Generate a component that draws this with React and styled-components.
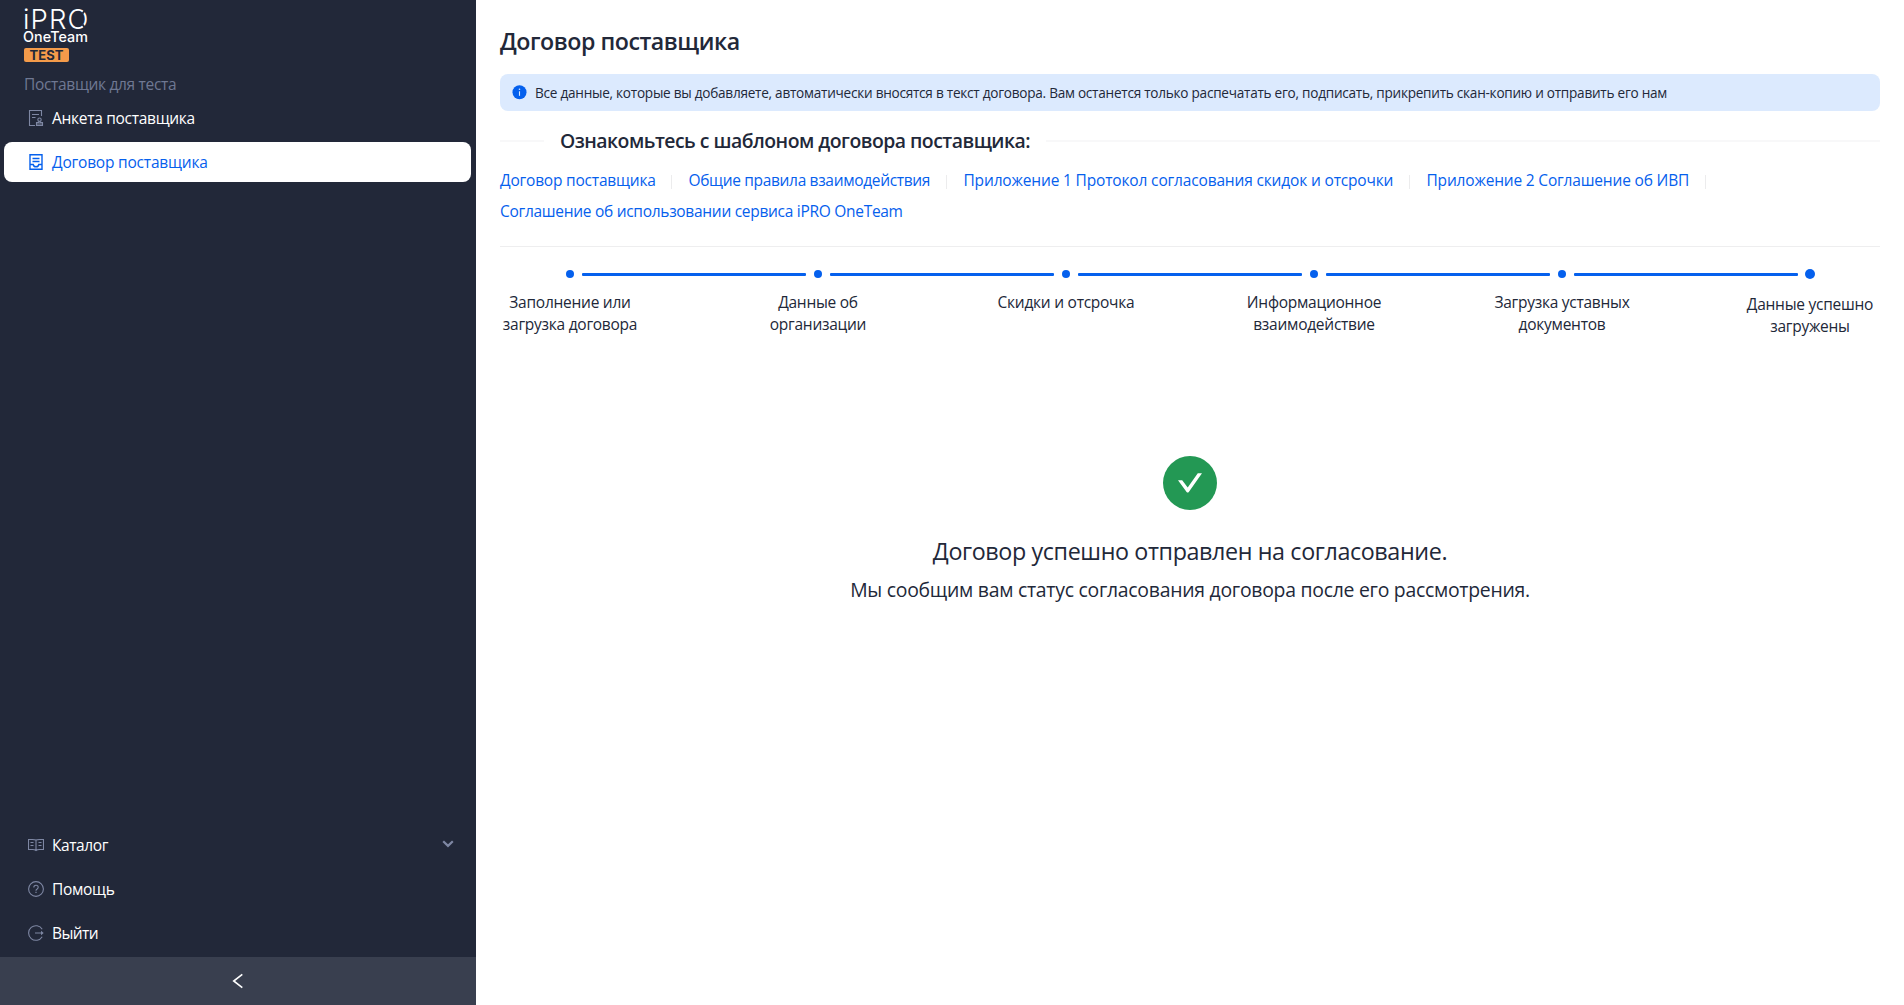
import React from 'react';
import styled, { createGlobalStyle } from 'styled-components';

const GlobalStyle = createGlobalStyle`
  * { box-sizing: border-box; }
  body { margin: 0; background: #fff; }
`;

const Page = styled.div`
  display: flex;
  height: 1005px;
  overflow: hidden;
  color: #222839;
  font: 400 15.5px/22px "Open Sans", "Noto Sans", sans-serif;
`;

/* Sidebar */

const Sidebar = styled.aside`
  display: flex;
  flex-direction: column;
  flex: none;
  width: 476px;
  background: #222839;
`;

const Brand = styled.div`
  display: flex;
  flex-direction: column;
  align-items: flex-start;
  padding: 7px 24px 0 23px;
  height: 72px;
  color: #fff;
  font-family: Inter, sans-serif;
`;

const BrandName = styled.div`
  position: relative;
  height: 24px;
  font-size: 27.5px;
  font-weight: 300;
  line-height: 24px;
  letter-spacing: 1.1px;

  /* cuts in the ring of the last letter */
  &::before, &::after {
    content: '';
    position: absolute;
    right: 4px;
    width: 2px;
    height: 5px;
    background: #222839;
  }
  &::before { top: 2px; transform: rotate(35deg); }
  &::after { top: 17px; transform: rotate(-35deg); }
`;

const BrandTeam = styled.div`
  height: 17px;
  font-size: 14.3px;
  font-weight: 500;
  line-height: 12px;
  letter-spacing: 0.1px;
`;

const BrandBadge = styled.div`
  width: 45px;
  height: 14px;
  margin-left: 1px;
  border-radius: 2px;
  background: #f49b4a;
  color: #222839;
  font-size: 13px;
  font-weight: 700;
  line-height: 14px;
  text-align: center;
`;

const Account = styled.div`
  height: 26px;
  padding-left: 24px;
  color: #6f7893;
  letter-spacing: -0.32px;
  line-height: 24px;
`;

const Menu = styled.nav`
  display: flex;
  flex-direction: column;
  gap: 4px;
  padding: 0 5px 4px 4px;
`;

const Spacer = styled.div`
  flex: 1;
`;

const MenuItem = styled.a`
  display: flex;
  align-items: center;
  gap: 8px;
  height: 40px;
  padding: 0 17px 0 24px;
  border-radius: 8px;
  background: ${(p) => (p.$active ? '#fff' : 'transparent')};
  color: ${(p) => (p.$active ? '#0560ed' : '#fff')};
  letter-spacing: ${(p) => p.$tracking}px;

  svg { flex: none; color: ${(p) => (p.$active ? '#0560ed' : '#7e87a3')}; }
`;

const MenuLabel = styled.span`
  flex: 1;
`;

const Collapse = styled.div`
  display: flex;
  align-items: center;
  justify-content: center;
  height: 48px;
  background: #393f4f;
  color: #fff;
`;

/* Content */

const Main = styled.main`
  flex: 1;
  display: flex;
  flex-direction: column;
  padding: 25px 24px 0;
`;

const Title = styled.h1`
  margin: 0 0 17px;
  font-size: 23.2px;
  font-weight: 600;
  line-height: 32px;
  letter-spacing: -0.47px;
`;

const Alert = styled.div`
  display: flex;
  align-items: center;
  gap: 8px;
  height: 37px;
  padding: 0 12px;
  border-radius: 8px;
  background: #dceafe;
  font-size: 13.6px;
  letter-spacing: -0.256px;
  white-space: nowrap;
`;

const SectionTitle = styled.h2`
  display: flex;
  align-items: center;
  gap: 16px;
  margin: 16px 0 15px;
  font-size: 19.4px;
  font-weight: 600;
  line-height: 27px;
  letter-spacing: -0.51px;
  white-space: nowrap;

  &::before, &::after {
    content: '';
    height: 2px;
    background: #f8f8f9;
  }
  &::before { width: 44px; }
  &::after { flex: 1; }
`;

const Links = styled.div`
  display: flex;
  flex-wrap: wrap;
  row-gap: 9px;
  padding-bottom: 24px;
  border-bottom: 1px solid #eeeeef;
`;

const LinkCell = styled.div`
  display: flex;
  align-items: center;
  width: ${(p) => p.$width}px;
`;

const DocLink = styled.a`
  flex: 1;
  color: #0560ed;
  letter-spacing: ${(p) => p.$tracking}px;
  white-space: nowrap;
`;

const Separator = styled.span`
  width: 1px;
  height: 14px;
  margin: 4px 17px 0 0;
  background: #ececed;
`;

const Steps = styled.div`
  display: flex;
  padding-top: 22px;
`;

const Step = styled.div`
  flex: none;
  width: ${(p) => (p.$last ? 140 : 248)}px;
`;

const StepTrack = styled.div`
  display: flex;
  align-items: center;
  width: 248px;
  height: 10px;
  padding-left: ${(p) => (p.$last ? 65 : 66)}px;
  gap: 8px;
`;

const Dot = styled.span`
  flex: none;
  width: ${(p) => (p.$last ? 10 : 8)}px;
  height: ${(p) => (p.$last ? 10 : 8)}px;
  border-radius: 50%;
  background: #0560ed;
`;

const Rail = styled.span`
  flex: none;
  width: 224px;
  height: 3px;
  border-radius: 1px;
  background: #0560ed;
`;

const StepLabel = styled.div`
  width: 140px;
  padding-top: ${(p) => (p.$last ? 14 : 12)}px;
  letter-spacing: -0.26px;
  text-align: center;
  white-space: pre-line;
`;

const Result = styled.section`
  display: flex;
  flex-direction: column;
  align-items: center;
  margin-top: 119px;
  text-align: center;

  svg { display: block; }
`;

const ResultTitle = styled.div`
  margin-top: 24px;
  font-size: 23.3px;
  line-height: 34px;
  letter-spacing: -0.38px;
`;

const ResultText = styled.div`
  margin-top: 6px;
  font-size: 19.4px;
  line-height: 32px;
  letter-spacing: -0.26px;
`;

function Stroke({ children, width = 16, height = 16, box = '0 0 16 16', weight = 1.1 }) {
  return (
    <svg width={width} height={height} viewBox={box} fill="none" stroke="currentColor" strokeWidth={weight}>
      {children}
    </svg>
  );
}

const FormIcon = () => (
  <Stroke>
    <path d="M7 15.500H1.500V.5h12V6M4 4.500h7M4 7.500h3.500" />
    <circle cx="11.500" cy="9.700" r="1.700" />
    <path d="M10.800 11.200v1.300H8.500v3h6v-3h-2.300v-1.300M8.500 14h6" />
  </Stroke>
);

const ContractIcon = () => (
  <Stroke weight={1.4}>
    <path d="M2 .7h12v14.600H2zM4.500 4.500h7M4.500 7.500h7M2 10.500h3.200c.3 1.500 1.300 2.300 2.800 2.300s2.500-.8 2.800-2.300H14" />
  </Stroke>
);

const CatalogIcon = () => (
  <Stroke>
    <path d="M8 3C7 2.500 5.800 2.500 4.500 2.500H.5v10h4.300c1.300 0 2.200.3 3.200 1 1-.7 1.900-1 3.200-1h4.300v-10h-4C10.200 2.500 9 2.500 8 3zM8 3v10.500M2.500 5.500h3M2.500 8.500h3M10.500 5.500h3M10.500 8.500h3" />
  </Stroke>
);

const HelpIcon = () => (
  <Stroke>
    <circle cx="8" cy="8" r="7.400" />
    <path d="M5.800 6.400C5.800 5.100 6.700 4.300 8 4.300s2.200.8 2.200 2c0 1-.7 1.500-1.300 1.900-.6.3-.9.6-.9 1.500" />
    <path d="M7.400 11.400h1.200" strokeWidth="1.200" />
  </Stroke>
);

const ExitIcon = () => (
  <Stroke>
    <path d="M14.200 4.300a7.300 7.300 0 1 0 0 7.400M7 8h7" />
    <path d="M13 5.800 15.700 8 13 10.200z" fill="currentColor" stroke="none" />
  </Stroke>
);

const InfoIcon = () => (
  <svg width="15" height="15" viewBox="0 0 15 15">
    <circle cx="7.500" cy="7.200" r="7" fill="#0560ed" />
    <path d="M7.500 6.300v4.500" stroke="#dceafe" strokeWidth="1.100" />
    <circle cx="7.500" cy="4.300" r=".8" fill="#dceafe" />
  </svg>
);

const menu = [
  { label: 'Анкета поставщика', icon: FormIcon, tracking: -0.29 },
  { label: 'Договор поставщика', icon: ContractIcon, tracking: -0.2, active: true },
];

const bottomMenu = [
  { label: 'Каталог', icon: CatalogIcon, tracking: -0.42, expandable: true },
  { label: 'Помощь', icon: HelpIcon, tracking: -0.3 },
  { label: 'Выйти', icon: ExitIcon, tracking: -0.6 },
];

const documents = [
  { label: 'Договор поставщика', width: 188.5, tracking: -0.2 },
  { label: 'Общие правила взаимодействия', width: 275, tracking: -0.33 },
  { label: 'Приложение 1 Протокол согласования скидок и отсрочки', width: 463, tracking: -0.16 },
  { label: 'Приложение 2 Соглашение об ИВП', width: 296, tracking: -0.18 },
  { label: 'Соглашение об использовании сервиса iPRO OneTeam', width: 410, tracking: -0.29, last: true },
];

const steps = [
  'Заполнение или\nзагрузка договора',
  'Данные об\nорганизации',
  'Скидки и отсрочка',
  'Информационное\nвзаимодействие',
  'Загрузка уставных\nдокументов',
  'Данные успешно\nзагружены',
];

function MenuList({ items }) {
  return (
    <Menu>
      {items.map(({ label, icon: Icon, tracking, active, expandable }) => (
        <MenuItem key={label} $active={active} $tracking={tracking}>
          <Icon />
          <MenuLabel>{label}</MenuLabel>
          {expandable && (
            <Stroke width={12} height={14} box="0 0 12 14" weight={2.2}>
              <path d="M1.200 3.200 6 7.900l4.800-4.700" />
            </Stroke>
          )}
        </MenuItem>
      ))}
    </Menu>
  );
}

export default function App() {
  return (
    <Page>
      <GlobalStyle />
      <Sidebar>
        <Brand>
          <BrandName>iPRO</BrandName>
          <BrandTeam>OneTeam</BrandTeam>
          <BrandBadge>TEST</BrandBadge>
        </Brand>
        <Account>Поставщик для теста</Account>
        <MenuList items={menu} />
        <Spacer />
        <MenuList items={bottomMenu} />
        <Collapse>
          <Stroke weight={1.6}>
            <path d="M12.300 1.300 3.700 8l8.600 6.700" />
          </Stroke>
        </Collapse>
      </Sidebar>
      <Main>
        <Title>Договор поставщика</Title>
        <Alert>
          <InfoIcon />
          <span>
            Все данные, которые вы добавляете, автоматически вносятся в текст договора. Вам останется только распечатать его,
            подписать, прикрепить скан-копию и отправить его нам
          </span>
        </Alert>
        <SectionTitle>Ознакомьтесь с шаблоном договора поставщика:</SectionTitle>
        <Links>
          {documents.map(({ label, width, tracking, last }) => (
            <LinkCell key={label} $width={width}>
              <DocLink $tracking={tracking}>{label}</DocLink>
              {!last && <Separator />}
            </LinkCell>
          ))}
        </Links>
        <Steps>
          {steps.map((label, i) => {
            const last = i === steps.length - 1;
            return (
              <Step key={label} $last={last}>
                <StepTrack $last={last}>
                  <Dot $last={last} />
                  {!last && <Rail />}
                </StepTrack>
                <StepLabel $last={last}>{label}</StepLabel>
              </Step>
            );
          })}
        </Steps>
        <Result>
          <svg width="54" height="54" viewBox="0 0 54 54">
            <circle cx="27" cy="27" r="27" fill="#239854" />
            <path d="M15 24.200h4.200l5.500 7.300L34.800 17.300H39L25.800 36q-1.100 1.200-2.200 0z" fill="#fff" />
          </svg>
          <ResultTitle>Договор успешно отправлен на согласование.</ResultTitle>
          <ResultText>Мы сообщим вам статус согласования договора после его рассмотрения.</ResultText>
        </Result>
      </Main>
    </Page>
  );
}
